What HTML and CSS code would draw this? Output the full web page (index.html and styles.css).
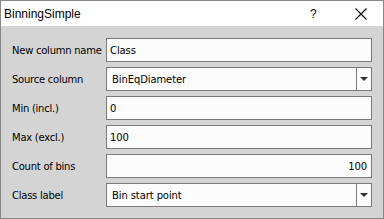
FILE: index.html
```html
<!DOCTYPE html>
<html lang="en">
<head>
    <meta charset="UTF-8">
    <title>BinningSimple</title>
    <link rel="stylesheet" href="styles.css">
</head>
<body>
    <div class="dialog">
        <div class="titlebar">
            <span class="title">BinningSimple</span>
            <span class="help-btn">?</span>
            <span class="close-btn">
                <svg width="12" height="12" viewBox="0 0 12 12">
                    <path d="M0.5 0.5 L11.5 11.5 M11.5 0.5 L0.5 11.5" stroke="#000" stroke-width="1.1" fill="none"/>
                </svg>
            </span>
        </div>
        <form class="form">
            <label class="form-label">New column name</label>
            <div class="field">Class</div>

            <label class="form-label">Source column</label>
            <div class="combo">
                <span class="combo-text">BinEqDiameter</span>
                <span class="combo-btn"><span class="arrow"></span></span>
            </div>

            <label class="form-label">Min (incl.)</label>
            <div class="field">0</div>

            <label class="form-label">Max (excl.)</label>
            <div class="field">100</div>

            <label class="form-label">Count of bins</label>
            <div class="field number">100</div>

            <label class="form-label">Class label</label>
            <div class="combo">
                <span class="combo-text">Bin start point</span>
                <span class="combo-btn"><span class="arrow"></span></span>
            </div>
        </form>
    </div>
</body>
</html>
```

FILE: styles.css
```css
body {
    margin: 0;
    font-family: "DejaVu Sans", sans-serif;
    font-size: 10px;
    color: #000;
}
.dialog {
    width: 384px;
    height: 219px;
    box-sizing: border-box;
    border: 1px solid #888;
    background-color: #d4d4d4;
    display: flex;
    flex-direction: column;
}
.titlebar {
    height: 25px;
    background-color: #fff;
    display: flex;
    align-items: center;
    padding-left: 3px;
}
.title {
    flex: 1;
    font-family: "Liberation Sans", sans-serif;
    font-size: 12px;
}
.help-btn {
    width: 14px;
    margin-right: 31px;
    font-family: "Liberation Sans", sans-serif;
    font-size: 12px;
}
.close-btn {
    display: flex;
    margin-right: 16px;
}
.form {
    display: grid;
    grid-template-columns: 94px 1fr;
    grid-auto-rows: 24px;
    row-gap: 5px;
    padding: 12px 11px 11px 11px;
}
.form-label {
    display: flex;
    align-items: center;
    letter-spacing: -0.25px;
}
.field {
    border: 1px solid #7a7a7a;
    background-color: #fcfcfc;
    display: flex;
    align-items: center;
    padding: 0 4px 0 3px;
    letter-spacing: -0.1px;
}
.field.number {
    justify-content: flex-end;
}
.combo {
    border: 1px solid #7a7a7a;
    background-color: #fcfcfc;
    display: flex;
}
.combo-text {
    flex: 1;
    display: flex;
    align-items: center;
    padding-left: 5px;
    letter-spacing: -0.1px;
}
.combo-btn {
    width: 14px;
    border-left: 1px solid #7a7a7a;
    display: flex;
    align-items: center;
    justify-content: center;
}
.arrow {
    width: 0;
    height: 0;
    border-left: 4px solid transparent;
    border-right: 4px solid transparent;
    border-top: 4px solid #333;
}
```
